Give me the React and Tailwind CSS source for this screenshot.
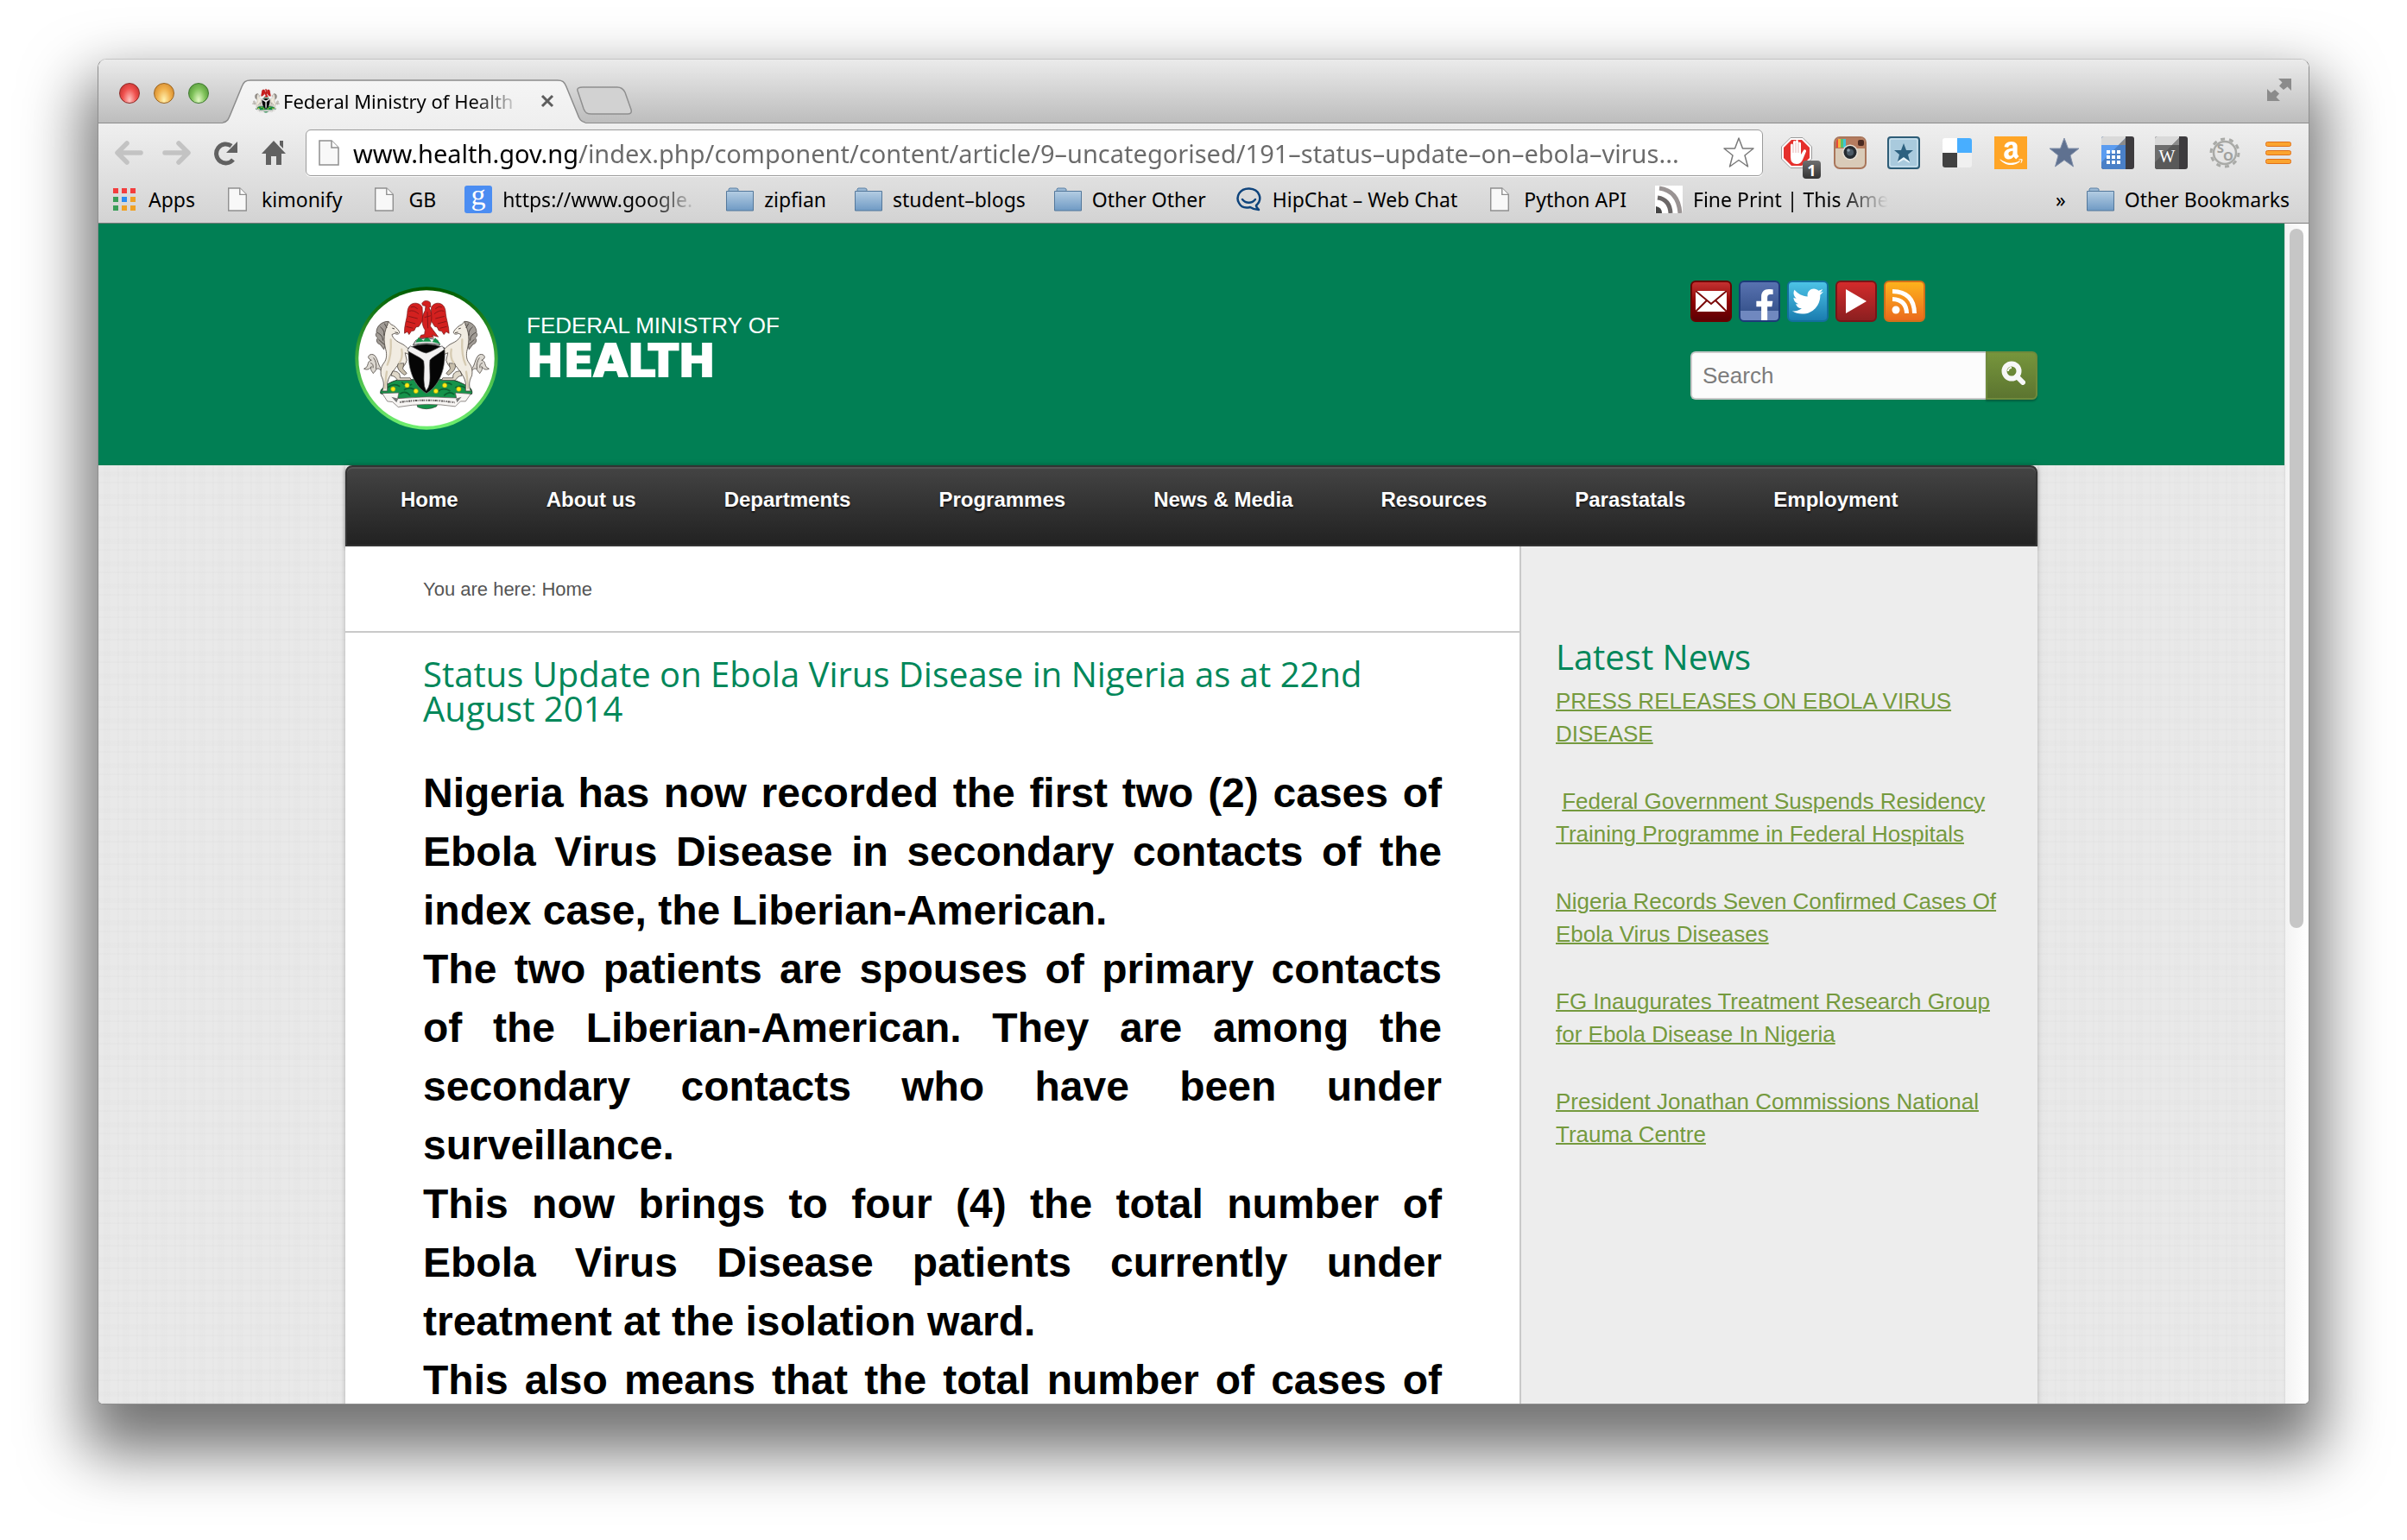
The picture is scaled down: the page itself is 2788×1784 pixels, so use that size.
import React from "react";
import { FaAmazon, FaFacebookF, FaTwitter } from "react-icons/fa";

const UI = "font-['Noto_Sans',sans-serif]";

function Crest({ className }) {
  return (
    <svg viewBox="30 35 506 508" className={className} aria-hidden="true">
      <defs>
        <linearGradient id="ring" x1="0" y1="0" x2="0" y2="1">
          <stop offset="0" stopColor="#005a00" />
          <stop offset="0.5" stopColor="#3fae3f" />
          <stop offset="1" stopColor="#70f070" />
        </linearGradient>
      </defs>
      <circle cx="283" cy="289" r="250" fill="url(#ring)" />
      <circle cx="283" cy="289" r="238" fill="#fff" />
      <CrestArms />
    </svg>
  );
}

function Horse() {
  return (
    <g stroke="#4e4842" strokeWidth="2.500" strokeLinejoin="round" strokeLinecap="round">
      <path d="M124 326 C112 312 112 282 96 276 C82 272 70 288 90 296 C72 300 84 318 64 326 C78 332 84 326 90 318 C84 330 94 336 96 342 C108 334 106 314 124 332Z" fill="#dcd8d1" />
      <path d="M98 288 Q110 304 106 326 M88 306 Q98 308 96 322" fill="none" />
      <path d="M148 160 C126 160 106 178 108 200 C102 208 108 214 112 218 C104 226 112 240 120 240 L134 258 C142 232 138 212 158 182Z" fill="#a19c96" />
      <path d="M146 172 L150 160 L158 170 C170 174 182 186 188 196 C190 204 180 208 172 202 L162 206 C164 216 174 228 192 236 C206 242 212 250 222 258 L230 250 L240 262 L222 276 L208 270 L214 296 C210 312 200 322 192 326 L184 312 C178 316 174 326 166 334 C158 346 148 360 146 376 L146 404 L128 404 C134 388 136 372 124 350 C122 336 122 322 132 308 C142 296 144 284 142 266 C136 240 128 214 146 172Z" fill="#f1ece2" />
      <path d="M166 334 C182 334 192 342 190 358 L226 358 L230 366 L182 366 C176 356 168 350 160 350Z" fill="#e0d9ca" />
      <path d="M184 308 C176 322 188 336 206 348 L214 342 L200 326 L204 308Z" fill="#c8bfac" />
      <path d="M158 224 C160 260 156 290 146 312 M144 336 C140 356 140 372 138 394 M196 258 C200 276 196 296 188 304" fill="none" stroke="#d6cbb2" strokeWidth="7" />
      <path d="M122 180 C132 188 136 196 134 208 M112 200 C124 206 130 214 130 226 M116 224 L134 240 M136 168 L144 182 M164 184 L170 186 M182 200 L174 198" fill="none" stroke="#4a4540" strokeWidth="3" />
    </g>
  );
}

function CrestArms() {
  return (
    <g>
      <path d="M122 412 C120 392 140 392 146 380 C160 372 184 360 206 364 L362 364 C386 364 404 376 418 382 C430 388 446 396 442 414 C420 420 400 426 376 430 L190 430 C166 426 144 420 122 412Z" fill="#15934a" stroke="#1e3d28" strokeWidth="3" />
      <path d="M146 392 Q168 374 190 388 M196 372 Q214 392 232 380 M340 384 Q356 368 372 382 M384 392 Q404 380 420 394 M204 400 Q230 384 250 408 M320 408 Q340 388 366 404 M190 414 Q210 400 226 420 M344 420 Q364 402 380 416" fill="none" stroke="#0b6330" strokeWidth="5" />
      <Horse />
      <g transform="translate(566 0) scale(-1 1)"><Horse /></g>
      <path d="M248 444 Q283 450 324 444 L318 458 Q283 474 252 460Z" fill="#15934a" stroke="#1e3d28" strokeWidth="2" />
      <path d="M128 412 L186 410 L182 430 Q283 420 388 428 L384 410 L438 414 L420 440 L402 440 L384 458 Q283 442 184 460 L164 442 L146 440Z" fill="#f7f5f3" stroke="#5a5450" strokeWidth="2" strokeLinejoin="round" />
      <path d="M190 443 Q283 429 382 444" fill="none" stroke="#5a5555" strokeWidth="6" strokeDasharray="4 3 7 2 3 4" />
      <path d="M160 424 L184 430 L178 444 M406 424 L386 430 L390 444" fill="#777" />
      {[[166, 397], [215, 384], [246, 404], [316, 404], [347, 384], [396, 397]].map(([x, y]) => (
        <circle key={x} cx={x} cy={y} r="8" fill="#ffe916" stroke="#8f9c12" strokeWidth="2" />
      ))}
      <path d="M220 252 Q283 226 346 252 C352 310 336 380 283 412 C230 380 216 310 220 252Z" fill="#050505" stroke="#777" strokeWidth="2" />
      <path d="M216 262 L226 246 C246 254 264 268 282 271 C302 266 320 252 338 246 L346 258 C326 274 304 284 295 296 C292 330 300 364 290 390 L282 404 L276 388 C270 358 278 326 273 298 C262 286 236 276 216 262Z" fill="#f3f2f2" stroke="#444" strokeWidth="2" />
      <path d="M236 242 L246 226 Q283 212 322 226 L330 242 Q283 232 236 242Z" fill="#eee" stroke="#444" strokeWidth="3" />
      <path d="M250 230 L256 220 L268 228Z M276 228 L284 216 L294 228Z M308 230 L314 222 L324 234Z" fill="#15934a" stroke="#15934a" strokeWidth="6" />
      <g stroke="#6d1011" strokeWidth="2" strokeLinejoin="round" fill="#d3201f">
        <path d="M268 110 C260 96 244 94 234 98 C222 102 216 116 216 132 C214 152 204 178 206 202 L216 196 L222 206 L230 194 L240 192 L246 180 L256 178 L270 156Z" />
        <path d="M300 110 C308 96 322 94 332 98 C344 102 350 116 350 132 C352 152 362 178 362 202 L352 196 L344 206 L336 194 L326 192 L320 180 L312 178 L298 156Z" />
        <path d="M267 98 C270 86 288 84 296 94 L298 108 L292 112 C304 130 302 156 296 176 L306 190 L324 214 L302 208 L308 216 L258 218 L264 208 L276 206 L278 190 C266 174 264 146 278 122 L280 106 L270 104Z" />
      </g>
      <path d="M228 110 Q240 104 252 116 M222 124 Q238 118 256 134 M220 142 L252 150 M214 160 L244 168 M212 178 L236 184 M338 110 Q326 104 314 116 M344 124 Q328 118 310 134 M346 142 L314 150 M352 160 L322 168 M354 178 L330 184 M286 126 L288 184 M276 146 L298 140" fill="none" stroke="#8b1516" strokeWidth="3" />
    </g>
  );
}

function PageIcon({ className }) {
  return (
    <svg viewBox="0 0 24 30" className={className} aria-hidden="true">
      <path d="M1 1H15L23 9V29H1Z" fill="#f8f8f8" stroke="#8e8e8e" strokeWidth="1.500" />
      <path d="M15 1V9H23" fill="#fff" stroke="#8e8e8e" strokeWidth="1.500" />
    </svg>
  );
}
function FolderIcon() {
  return (
    <svg viewBox="0 0 32 28" className="h-7 w-8" aria-hidden="true">
      <defs>
        <linearGradient id="fold" x1="0" y1="0" x2="0" y2="1">
          <stop offset="0" stopColor="#b4cde3" />
          <stop offset="1" stopColor="#6f9ac4" />
        </linearGradient>
      </defs>
      <path d="M3 5V2L4 1H12L14 2V5" fill="#9ab8d4" stroke="#5f83a6" />
      <path d="M.5 4.500H31.500V27H.500Z" fill="url(#fold)" stroke="#54789b" />
    </svg>
  );
}
function AppsIcon() {
  const c = ["#f33d3d", "#f33d3d", "#f33d3d", "#3a9e58", "#2b8cf2", "#f0a124", "#3a9e58", "#f0a124", "#f0a124"];
  return (
    <svg viewBox="0 0 32 32" className="size-8" aria-hidden="true">
      {c.map((f, i) => (
        <rect key={i} x={3 + (i % 3) * 10} y={3 + Math.floor(i / 3) * 10} width="6" height="6" fill={f} />
      ))}
    </svg>
  );
}
function GoogleIcon() {
  return (
    <svg viewBox="0 0 32 32" className="size-8" aria-hidden="true">
      <rect width="32" height="32" rx="3" fill="#4b8df2" />
      <text x="16" y="22" textAnchor="middle" fontSize="34" fill="#fff" fontFamily="Liberation Serif, serif">g</text>
    </svg>
  );
}
function HipChatIcon() {
  return (
    <svg viewBox="0 0 32 32" className="size-8" fill="none" stroke="#0f447c" strokeWidth="2.500" aria-hidden="true">
      <path d="M25 23C33 16 29 4 17 3.500C6 3 1 13 5 20C8 26 14 26 18 25C21 27 24 28 28 28C26 26 25 25 25 23Z" strokeLinejoin="round" />
      <path d="M9 16C13 21 20 21 24 16" strokeLinecap="round" />
    </svg>
  );
}
function PrintFeedIcon() {
  return (
    <svg viewBox="0 0 32 32" className="size-8" aria-hidden="true">
      <rect width="32" height="32" fill="#fff" />
      <path d="M1 24Q8 25 8 32H1Z" fill="#444" />
      <path d="M3 14Q17 16 18 32" fill="none" stroke="#6b6767" strokeWidth="5" />
      <path d="M5 3Q27 6 29 32" fill="none" stroke="#9a9494" strokeWidth="5" />
    </svg>
  );
}

const bookmarks = [
  { label: "Apps", icon: <AppsIcon /> },
  { label: "kimonify", icon: <PageIcon className="h-7 w-8" /> },
  { label: "GB", icon: <PageIcon className="h-7 w-8" /> },
  { label: "https://www.google.", icon: <GoogleIcon />, fade: true },
  { label: "zipfian", icon: <FolderIcon /> },
  { label: "student–blogs", icon: <FolderIcon /> },
  { label: "Other Other", icon: <FolderIcon /> },
  { label: "HipChat – Web Chat", icon: <HipChatIcon /> },
  { label: "Python API", icon: <PageIcon className="h-7 w-8" /> },
  { label: "Fine Print | This Ame", icon: <PrintFeedIcon />, fade: true },
];

function Bookmark({ label, icon, fade }) {
  return (
    <a href="#" className="flex shrink-0 items-center gap-3 whitespace-nowrap">
      {icon}
      <span className={fade ? "w-[226px] overflow-hidden mask-r-from-75% mask-r-to-100%" : ""}>{label}</span>
    </a>
  );
}

function TitleBar() {
  return (
    <div className="flex h-[73px] shrink-0 items-end bg-linear-to-b from-[#ebebeb] to-[#bdbdbd] pl-6 pr-5">
      <div className="flex gap-4 self-center pt-1">
        <button aria-label="Close window" className="size-6 rounded-full border border-[#8d2b28] bg-radial-[at_50%_85%] from-[#ffc4c0] via-[#f0524f] to-[#b82623]" />
        <button aria-label="Minimise window" className="size-6 rounded-full border border-[#9a6420] bg-radial-[at_50%_85%] from-[#fff2b0] via-[#f0b04c] to-[#c87b24]" />
        <button aria-label="Zoom window" className="size-6 rounded-full border border-[#3f7a30] bg-radial-[at_50%_85%] from-[#e2f9c4] via-[#7fc25a] to-[#46872f]" />
      </div>
      <div className="relative ml-4 flex h-[50px] w-[420px] items-center pl-[34px] pr-9">
        <svg viewBox="0 0 416 51" preserveAspectRatio="none" className="absolute left-0 top-0 h-[51px] w-full" aria-hidden="true">
          <defs>
            <linearGradient id="tab" x1="0" y1="0" x2="0" y2="1">
              <stop offset="0" stopColor="#f5f5f5" />
              <stop offset="1" stopColor="#efefef" />
            </linearGradient>
          </defs>
          <path d="M0 50C6 49 7 45 9 40L22 8C24 3 26 1 32 1H384C390 1 392 3 394 8L407 40C409 46 411 49 416 50V51H0Z" fill="url(#tab)" />
          <path d="M0 50C6 49 7 45 9 40L22 8C24 3 26 1 32 1H384C390 1 392 3 394 8L407 40C409 46 411 49 416 50" fill="none" stroke="#8c8c8c" strokeWidth="1.500" />
        </svg>
        <svg viewBox="60 80 446 400" className="relative size-8 shrink-0" aria-hidden="true"><CrestArms /></svg>
        <span className="relative ml-1 w-[276px] overflow-hidden whitespace-nowrap text-[22px] leading-8 mask-r-from-80% mask-r-to-100%">Federal Ministry of Health</span>
        <button aria-label="Close tab" className="relative ml-auto">
          <svg viewBox="0 0 16 16" className="size-4" stroke="#5d5d5d" strokeWidth="3"><path d="M2 2L14 14M14 2L2 14" /></svg>
        </button>
      </div>
      <button aria-label="New tab" className="-ml-2.5 mb-2 self-end">
        <svg viewBox="0 0 64 34" className="h-[34px] w-16">
          <path d="M7 1H47C52 1 54 3 56 7L63 27C64 31 62 32 59 32H17C12 32 10 31 8 26L1 5C0 2 3 1 7 1Z" fill="#d2d2d2" stroke="#8f8f8f" strokeWidth="1.500" />
        </svg>
      </button>
      <button aria-label="Full screen" className="mb-6 ml-auto">
        <svg viewBox="0 0 28 28" className="size-7" fill="#8b8b8b">
          <path d="M13 1H28V15L23.500 10.500L19 14L14 9.500L17.500 5.500Z" />
          <path d="M15 27H0V13L4.500 17.500L9 14L14 18.500L10.500 22.500Z" />
        </svg>
      </button>
    </div>
  );
}

const star = "M19 2L23.500 14H36L26 22L29.500 35L19 27.500L8.500 35L12 22L2 14H14.500Z";

function Extensions() {
  return (
    <div className="flex items-center gap-6 pl-5">
      <button aria-label="Ad blocker, 1 blocked" className="relative">
        <svg viewBox="0 0 38 38" className="size-[38px]">
          <path d="M12 1.500H26L36.500 12V26L26 36.500H12L1.500 26V12Z" fill="#fff" stroke="#9b9b9b" />
          <path d="M13 4H25L34 13V25L25 34H13L4 25V13Z" fill="#e5302c" />
          <path d="M12 20V10a1.500 1.500 0 0 1 3 0V6.500a1.500 1.500 0 0 1 3 0V5.500a1.500 1.500 0 0 1 3 0V8a1.500 1.500 0 0 1 3 0V21L27 16a1.700 1.700 0 0 1 3 1.500L26 27Q24 32 19 32Q12 32 12 24Z" fill="#fff" />
          <path d="M15 9V19M18 7V19M21 8V19" stroke="#e0a5a3" strokeWidth=".8" />
        </svg>
        <span className="absolute left-[26px] top-7 flex h-[21px] w-[21px] items-center justify-center rounded-sm bg-linear-to-b from-[#707070] to-[#333] text-[18px] leading-5 font-bold text-white">1</span>
      </button>
      <button aria-label="Instagram">
        <svg viewBox="0 0 38 38" className="size-[38px]">
          <rect x="1" y="1" width="36" height="36" rx="6" fill="#d9cbb8" stroke="#a9765b" strokeWidth="2" />
          <path d="M2 14V7Q2 2 7 2H31Q36 2 36 7V14Z" fill="#b57c5f" />
          <path d="M3 13V5L5 3V13Z" fill="#e8493a" /><path d="M5 3H8V13H5Z" fill="#f2b33c" /><path d="M8 3H11V13H8Z" fill="#59c46b" /><path d="M11 3H14V13H11Z" fill="#3fc5d9" />
          <rect x="28" y="4" width="7" height="7" rx="2" fill="#4a2a22" />
          <circle cx="19" cy="18.500" r="9" fill="#e8e2d8" /><circle cx="19" cy="18.500" r="7.500" fill="#252b30" /><circle cx="19" cy="18.500" r="4" fill="#4b5a66" /><circle cx="17" cy="16" r="1.800" fill="#8fa0ad" />
        </svg>
      </button>
      <button aria-label="Bookmark star">
        <svg viewBox="0 0 38 38" className="size-[38px]">
          <rect x="1" y="1" width="36" height="36" rx="3" fill="#a9cadd" stroke="#2d5c76" strokeWidth="2" />
          <rect x="3" y="3" width="32" height="32" rx="2" fill="none" stroke="#d8ebf5" />
          <path d="M12 31L19 27L26 31L24 26L19 24L14 26Z" fill="#eaf5fa" />
          <path d="M19 8L22 16H30L24 21L26 29L19 24L12 29L14 21L8 16H16Z" fill="#2d6180" />
        </svg>
      </button>
      <button aria-label="Delicious">
        <svg viewBox="0 0 38 38" className="size-[38px]">
          <path d="M5 2H19V19H2V5Q2 2 5 2Z" fill="#fff" /><path d="M19 2H33Q36 2 36 5V19H19Z" fill="#48aeff" />
          <path d="M2 19H19V36H5Q2 36 2 33Z" fill="#414141" /><path d="M19 19H36V33Q36 36 33 36H19Z" fill="#f0f0f0" />
        </svg>
      </button>
      <button aria-label="Amazon" className="flex size-[38px] items-center justify-center bg-[#ffa526] text-[31px] text-white"><FaAmazon /></button>
      <button aria-label="Favourite">
        <svg viewBox="0 0 38 38" className="size-[38px]"><path d={star} fill="#5f7190" stroke="#8492ab" /></svg>
      </button>
      <button aria-label="Calendar">
        <svg viewBox="0 0 38 38" className="size-[38px]">
          <rect width="38" height="38" rx="3" fill="#3d3b3e" /><path d="M3 0H28V38H3Q0 38 0 35V3Q0 0 3 0Z" fill="#4a80c7" />
          <path d="M0 10H20L0 30Z" fill="#5b9cf0" /><path d="M3 0H28V2L20 10H0V3Q0 0 3 0Z" fill="#d9d9d9" /><path d="M28 2L20 10H28Z" fill="#8b8b8b" />
          {[16, 22, 28].map((y) => [6, 12, 18].map((x) => <rect key={x + "-" + y} x={x} y={y} width="4" height="4" fill="#fff" />))}
        </svg>
      </button>
      <button aria-label="Wikipedia">
        <svg viewBox="0 0 38 38" className="size-[38px]">
          <rect width="38" height="38" rx="3" fill="#3d3b3e" /><path d="M3 0H28V38H3Q0 38 0 35V3Q0 0 3 0Z" fill="#595959" />
          <path d="M0 10H20L0 30Z" fill="#6d6d6d" /><path d="M3 0H28V2L20 10H0V3Q0 0 3 0Z" fill="#d9d9d9" /><path d="M28 2L20 10H28Z" fill="#8b8b8b" />
          <text x="14" y="30" textAnchor="middle" fontSize="20" fill="#fff" fontFamily="Liberation Serif, serif">W</text>
        </svg>
      </button>
      <button aria-label="Settings gear">
        <svg viewBox="0 0 38 38" className="size-[38px]" fill="none" stroke="#a9aaa7">
          <circle cx="19" cy="19" r="13" strokeWidth="2.500" /><circle cx="19" cy="19" r="16" strokeWidth="3" strokeDasharray="5 5" />
          <text x="14" y="19" textAnchor="middle" fontSize="15" fill="#a0a19e" stroke="none" fontWeight="bold">S</text>
          <text x="23" y="28" textAnchor="middle" fontSize="15" fill="#a0a19e" stroke="none" fontWeight="bold">O</text>
        </svg>
      </button>
      <button aria-label="Menu">
        <svg viewBox="0 0 38 38" className="size-[38px]" fill="#fba42f" stroke="#e0701a">
          {[6, 16, 26].map((y) => <rect key={y} x="4.500" y={y + 0.5} width="29" height="5" rx="2" />)}
        </svg>
      </button>
    </div>
  );
}

function Toolbar() {
  return (
    <div className="shrink-0 border-y border-t-[#8c8c8c] border-b-[#7c7c7c] bg-linear-to-b from-[#efefef] to-[#d3d3d3]">
      <div className="flex items-center pl-4 pr-4 pt-[7px]">
        <div className="flex items-center gap-[18px]">
          <button aria-label="Back"><svg viewBox="0 0 38 38" className="size-[38px]" fill="none" stroke="#c3c3c3" strokeWidth="5.500" strokeLinecap="round" strokeLinejoin="round"><path d="M33 19H7M17 8L6 19L17 30" /></svg></button>
          <button aria-label="Forward"><svg viewBox="0 0 38 38" className="size-[38px]" fill="none" stroke="#c3c3c3" strokeWidth="5.500" strokeLinecap="round" strokeLinejoin="round"><path d="M5 19H31M21 8L32 19L21 30" /></svg></button>
          <button aria-label="Reload"><svg viewBox="0 0 38 38" className="size-[38px]"><path d="M28 27A11 11 0 1 1 26 11" fill="none" stroke="#616161" strokeWidth="5" /><path d="M33 6V19H20Z" fill="#616161" /></svg></button>
          <button aria-label="Home page"><svg viewBox="0 0 38 38" className="size-[38px]" fill="#616161"><path d="M19 5L33 20H28V33H22V23H16V33H10V20H5ZM26 5H30V14L26 10Z" /></svg></button>
        </div>
        <div className="ml-[18px] flex h-[54px] flex-1 items-center rounded-md border border-[#9b9b9b] bg-white pl-3.5 pr-2 shadow-[0_1px_0_#fff]">
          <PageIcon className="h-[30px] w-6" />
          <input
            aria-label="Address"
            type="text"
            defaultValue="www.health.gov.ng/index.php/component/content/article/9–uncategorised/191–status–update–on–ebola–virus..."
            className="ml-4 h-11 min-w-0 flex-1 bg-linear-to-r from-black from-[260px] to-[#6a6a6a] to-[260px] bg-clip-text text-[29px] text-transparent outline-none"
          />
          <button aria-label="Bookmark this page"><svg viewBox="0 0 38 38" className="size-[38px]" fill="#fff" stroke="#7a7a7a" strokeWidth="1.500" strokeLinejoin="round"><path d={star} /></svg></button>
        </div>
        <Extensions />
      </div>
      <div className="flex h-[54px] items-center gap-[33px] pl-[14px] pr-[22px] text-[23px]">
        {bookmarks.map((b) => <Bookmark key={b.label} {...b} />)}
        <div className="ml-auto flex items-center gap-6">
          <button aria-label="More bookmarks">»</button>
          <Bookmark label="Other Bookmarks" icon={<FolderIcon />} />
        </div>
      </div>
    </div>
  );
}

function Social() {
  const box = "flex size-12 items-center justify-center rounded-md border-2";
  return (
    <div className="flex gap-2">
      <a href="#" aria-label="Email" className={`${box} border-[#6b0000] bg-linear-to-b from-[#c43131] via-[#920000] to-[#5c0004]`}>
        <svg viewBox="0 0 36 24" className="h-6 w-9"><rect width="36" height="24" fill="#fff" /><path d="M0 0L18 15L36 0M0 24L13 11M36 24L23 11" fill="none" stroke="#7b0a0a" strokeWidth="2" /></svg>
      </a>
      <a href="#" aria-label="Facebook" className={`${box} items-end border-[#1c3a78] bg-linear-to-b from-[#5872b0] from-0% via-[#39558f] via-75% to-[#7088bf] to-75% text-[36px] text-white`}><FaFacebookF className="translate-x-1.5" /></a>
      <a href="#" aria-label="Twitter" className={`${box} border-[#126f9c] bg-linear-to-b from-[#4cc3e6] to-[#1a7db0] text-[36px] text-white`}><FaTwitter /></a>
      <a href="#" aria-label="YouTube" className={`${box} border-[#7a1417] bg-linear-to-b from-[#d32b2b] to-[#8c1f20]`}>
        <svg viewBox="0 0 24 28" className="h-7 w-6"><path d="M0 0L24 14L0 28Z" fill="#fff" /></svg>
      </a>
      <a href="#" aria-label="RSS" className={`${box} border-[#d0701a] bg-linear-to-b from-[#fdb21c] to-[#ea6a1c]`}>
        <svg viewBox="0 0 30 30" className="size-[30px]" fill="none" stroke="#fff" strokeWidth="5"><circle cx="5" cy="25" r="4.500" fill="#fff" stroke="none" /><path d="M1 12.500Q17 13 17.500 29M1 3.500Q26 4 26.500 29" /></svg>
      </a>
    </div>
  );
}

function SiteHeader() {
  return (
    <header className="bg-[#017f54]">
      <div className="mx-auto flex max-w-[1960px] items-start justify-between pb-10 pt-[66px]">
        <a href="#" className="flex pl-[10px] pt-1.5 text-white">
          <Crest className="size-[168px]" />
          <span className="ml-8 flex flex-col pt-8">
            <span className="text-[26px] leading-7">FEDERAL MINISTRY OF</span>
            <span className="font-['DejaVu_Sans'] text-[51px] leading-[56px] font-bold [-webkit-text-stroke:2px_white]">HEALTH</span>
          </span>
        </a>
        <div className="flex w-[402px] flex-col gap-[34px]">
          <Social />
          <form className="flex h-14" onSubmit={(e) => e.preventDefault()}>
            <input type="search" aria-label="Search" placeholder="Search" className="min-w-0 flex-1 rounded-l-md border-2 border-r-0 border-[#c9c9c9] bg-[#fcfcfc] px-3 text-[26px] outline-none placeholder:text-[#7c7c7c]" />
            <button aria-label="Submit search" className="flex w-[60px] justify-center rounded-r-md border-2 border-[#6f8a3c] bg-linear-to-b from-[#76953c] to-[#5c7530] pl-1 pt-[9px] shadow-[0_2px_2px_rgba(0,0,0,.25)]">
              <svg viewBox="0 0 28 28" className="size-7"><path d="M18 18L25 25" stroke="#f7f7f7" strokeWidth="6" strokeLinecap="round" /><circle cx="12" cy="12" r="8.500" fill="none" stroke="#f7f7f7" strokeWidth="6" /><path d="M8 12A4 4 0 0 1 12 8" fill="none" stroke="#f7f7f7" strokeWidth="2" /></svg>
            </button>
          </form>
        </div>
      </div>
    </header>
  );
}

const nav = ["Home", "About us", "Departments", "Programmes", "News & Media", "Resources", "Parastatals", "Employment"];
const paragraphs = [
  "Nigeria has now recorded the first two (2) cases of Ebola Virus Disease in secondary contacts of the index case, the Liberian-American.",
  "The two patients are spouses of primary contacts of the Liberian-American. They are among the secondary contacts who have been under surveillance.",
  "This now brings to four (4) the total number of Ebola Virus Disease patients currently under treatment at the isolation ward.",
];
const news = [
  "PRESS RELEASES ON EBOLA VIRUS DISEASE",
  "Federal Government Suspends Residency Training Programme in Federal Hospitals",
  "Nigeria Records Seven Confirmed Cases Of Ebola Virus Diseases",
  "FG Inaugurates Treatment Research Group for Ebola Disease In Nigeria",
  "President Jonathan Commissions National Trauma Centre",
];

function Site() {
  return (
    <div className="flex min-w-0 flex-1 flex-col overflow-hidden bg-[#e9e9e9] bg-[repeating-linear-gradient(90deg,rgba(0,0,0,.012)_0_2px,transparent_2px_6px,rgba(0,0,0,.008)_6px_14px,transparent_14px_22px),repeating-linear-gradient(0deg,rgba(0,0,0,.012)_0_2px,transparent_2px_8px,rgba(0,0,0,.008)_8px_14px,transparent_14px_26px)] font-['Liberation_Sans',Arial,sans-serif]">
      <SiteHeader />
      <div className="mx-auto flex w-full max-w-[1960px] flex-1 flex-col shadow-[0_0_6px_rgba(0,0,0,.25)]">
        <nav className="flex h-[94px] shrink-0 gap-[102px] rounded-t-lg border-2 border-[#333] bg-linear-to-b from-[#444] to-[#222] pl-[62px] pt-6 text-[24px] leading-7 font-bold text-white shadow-[inset_0_2px_0_#555,0_2px_4px_rgba(0,0,0,.3)] text-shadow-[0_2px_2px_rgba(0,0,0,.6)]">
          {nav.map((n) => <a key={n} href="#" className="whitespace-nowrap">{n}</a>)}
        </nav>
        <div className="flex flex-1">
          <main className="min-w-0 flex-1 bg-white">
            <div className="flex h-[100px] items-center border-b-2 border-[#c9c9c9] pl-[90px] text-[22px] text-[#555]">You are here: Home</div>
            <article className="px-[90px] pt-7">
              <h1 className="font-['Open_Sans'] text-[40px] leading-10 text-[#01875a]">Status Update on Ebola Virus Disease in Nigeria as at 22nd August 2014</h1>
              <div className="mt-11 text-justify text-[48px] leading-[68px] font-bold text-black">
                {paragraphs.map((p) => <p key={p}>{p}</p>)}
                <p className="[text-align-last:justify]">This also means that the total number of cases of</p>
              </div>
            </article>
          </main>
          <aside className="w-[600px] shrink-0 border-l-2 border-[#c9c9c9] bg-[#ededed] pl-10 pr-8 pt-[108px]">
            <h2 className="font-['Open_Sans'] text-[40px] leading-10 text-[#01875a]">Latest News</h2>
            <ul className="mt-3 flex flex-col gap-10 text-[26px] leading-[38px]">
              {news.map((n, i) => (
                <li key={n}>{i === 1 && "\u00a0"}<a href="#" className="text-[#759a3e] underline decoration-2">{n}</a></li>
              ))}
            </ul>
          </aside>
        </div>
      </div>
    </div>
  );
}

export default function App() {
  return (
    <div className="h-screen bg-white px-[113px] pb-[157px] pt-[68px]">
      <div className={`${UI} flex h-full flex-col overflow-hidden rounded-t-[10px] rounded-b-md border border-[#8f8f8f] border-t-[#c4c4c4] bg-white text-black shadow-[0_40px_70px_16px_rgba(0,0,0,.55)]`}>
        <TitleBar />
        <Toolbar />
        <div className="flex min-h-0 flex-1">
          <Site />
          <div className="w-7 shrink-0 border-l border-[#dcdcdc] bg-linear-to-r from-[#f3f3f3] to-white pl-[5px] pt-1.5">
            <div className="h-[810px] w-4 rounded-full bg-[#c6c6c6]" />
          </div>
        </div>
      </div>
    </div>
  );
}
